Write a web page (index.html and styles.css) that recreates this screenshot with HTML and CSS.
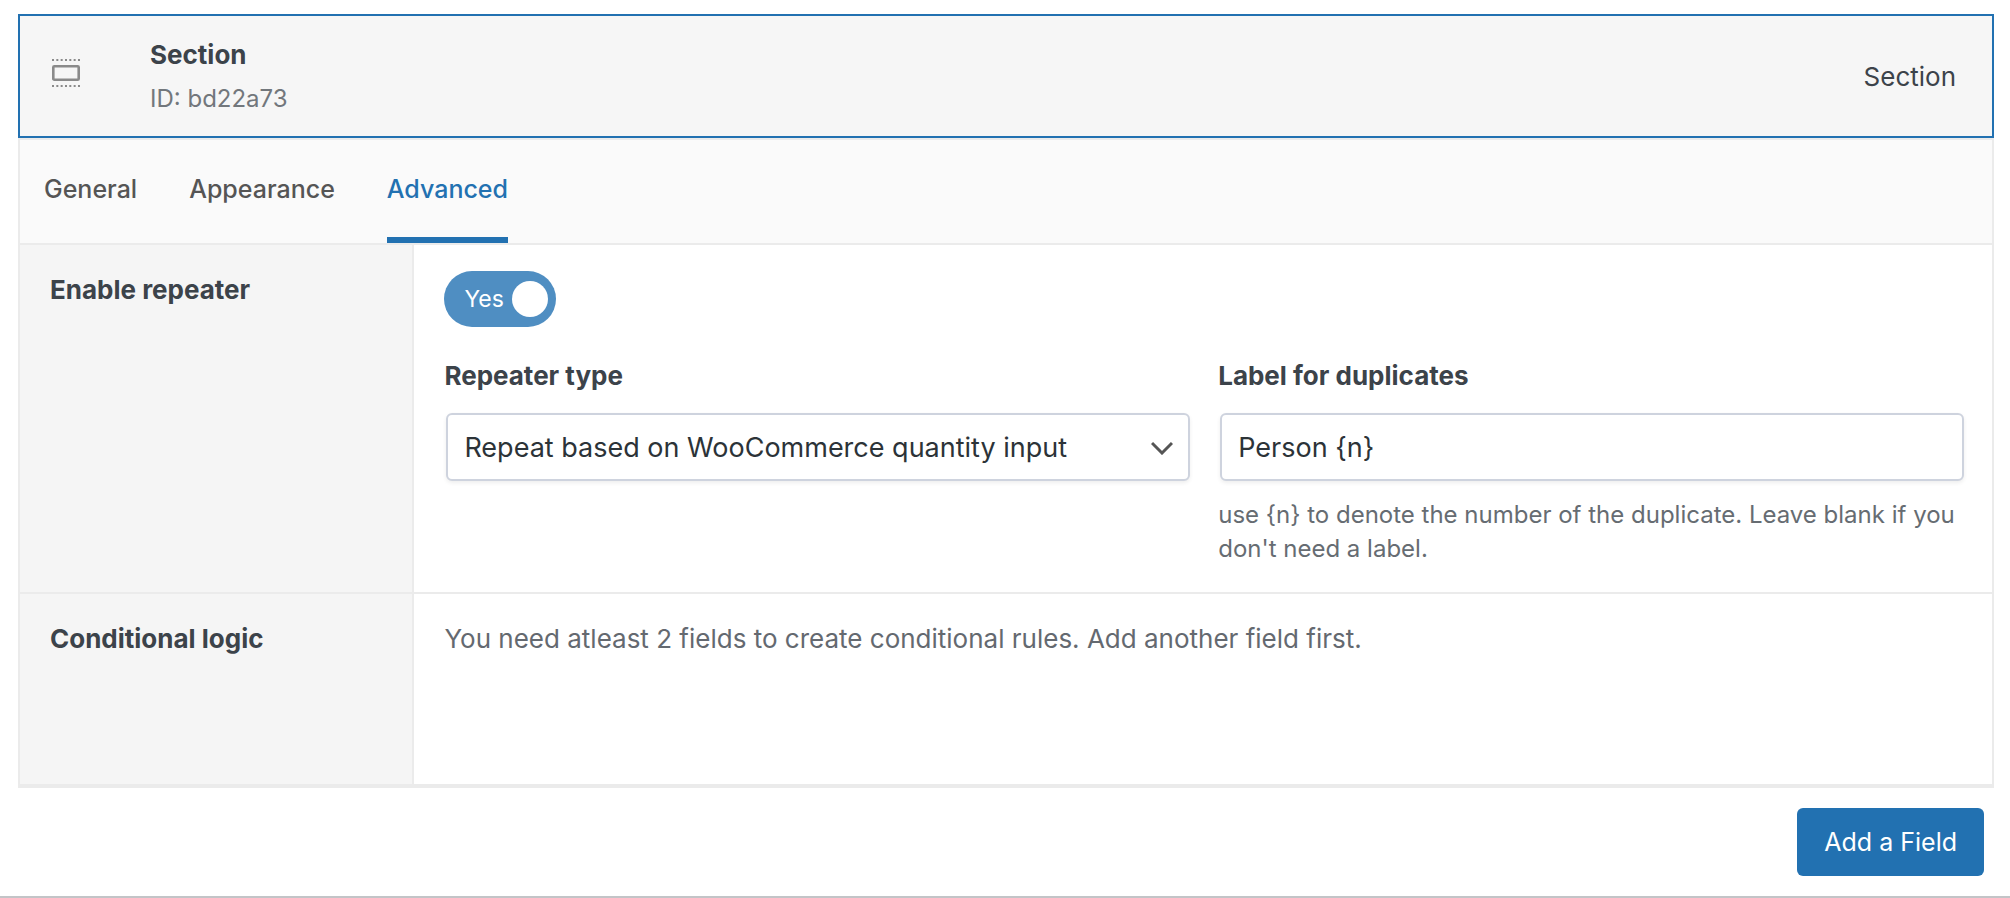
FILE: index.html
```html
<!DOCTYPE html>
<html lang="en">
<head>
    <meta charset="UTF-8">
    <title>Section field</title>
    <link rel="stylesheet" href="styles.css">
</head>
<body>
<div class="field-group">
    <div class="field-header">
        <svg class="field-icon" width="28" height="28" viewBox="0 0 28 28" fill="none" stroke="#8a8a8a">
            <path d="M0 1h28M0 27h28" stroke-width="2" stroke-dasharray="2 2.33"/>
            <rect x="1.3" y="7.3" width="25.4" height="13.4" rx="1" stroke-width="2.6"/>
        </svg>
        <div class="field-title">
            <h3>Section</h3>
            <p>ID: bd22a73</p>
        </div>
        <span class="field-type">Section</span>
    </div>
    <div class="field-body">
        <nav class="tabs">
            <a href="#general">General</a>
            <a href="#appearance">Appearance</a>
            <a href="#advanced" class="active">Advanced</a>
        </nav>
        <div class="setting">
            <div class="setting-label">Enable repeater</div>
            <div class="setting-content">
                <label class="toggle">
                    <input type="checkbox" name="repeater" aria-label="Enable repeater" checked>
                    <span>Yes</span>
                    <i class="knob"></i>
                </label>
                <div class="columns">
                    <div class="column">
                        <label for="repeater-type">Repeater type</label>
                        <div class="select">
                            <select id="repeater-type" class="control">
                                <option>Repeat based on WooCommerce quantity input</option>
                                <option>Repeat with a button</option>
                            </select>
                            <svg class="chevron" width="22" height="14" viewBox="0 0 22 14" fill="none" stroke="#555" stroke-width="3">
                                <path d="M1 2l10 10L21 2"/>
                            </svg>
                        </div>
                    </div>
                    <div class="column">
                        <label for="duplicate-label">Label for duplicates</label>
                        <div class="text">
                            <input type="text" id="duplicate-label" class="control" value="Person {n}">
                        </div>
                        <p class="help">use {n} to denote the number of the duplicate. Leave blank if you don't need a label.</p>
                    </div>
                </div>
            </div>
        </div>
        <div class="setting conditions">
            <div class="setting-label">Conditional logic</div>
            <div class="setting-content">
                <p class="notice">You need atleast 2 fields to create conditional rules. Add another field first.</p>
            </div>
        </div>
    </div>
</div>
<div class="actions">
    <button type="button" class="button">Add a Field</button>
</div>
</body>
</html>
```

FILE: styles.css
```css
* {
    box-sizing: border-box;
}
body {
    font-family: Inter, "Liberation Sans", sans-serif;
    font-size: 26px;
    line-height: 36px;
    color: #3c434a;
    background: #fff;
    margin: 0;
    border-bottom: 2px solid #c3c4c7;
}
h3, p {
    margin: 0;
    font-size: inherit;
}
.field-group {
    padding: 14px 16px 0 18px;
}
.field-header {
    display: flex;
    align-items: center;
    background: #f6f6f6;
    border: 2px solid #2271b1;
    padding: 17px 36px 15px 32px;
}
.field-icon {
    margin: 0 70px 8px 0;
}
.field-title {
    flex: 1;
}
.field-title h3 {
    line-height: 44px;
    font-weight: 700;
}
.field-title p {
    font-size: 24px;
    line-height: 44px;
    color: #72777c;
}
.field-body {
    border: 2px solid #ebebeb;
    border-bottom-width: 4px;
}
.tabs {
    display: flex;
    gap: 52px;
    padding: 0 24px;
    background: #fafafa;
    border-bottom: 2px solid #ebebeb;
    font-size: 25px;
}
.tabs a {
    padding: 31px 0 30px;
    border-bottom: 6px solid transparent;
    color: #555;
    font-weight: 500;
    text-decoration: none;
}
.tabs .active {
    color: #2271b1;
    border-bottom-color: #2271b1;
}
.setting {
    display: flex;
}
.setting + .setting {
    border-top: 2px solid #ebebeb;
}
.setting-label {
    flex: 0 0 20%;
    padding: 27px 30px;
    background: #f5f5f5;
    border-right: 2px solid #ebebeb;
    font-weight: 700;
}
.setting-content {
    flex: 1;
    padding: 26px 28px 26px 30px;
}
.conditions {
    min-height: 192px;
}
.conditions .setting-content {
    padding-top: 27px;
}
.toggle {
    display: flex;
    align-items: center;
    justify-content: space-between;
    width: 112px;
    height: 56px;
    padding: 0 8px 0 20px;
    border-radius: 28px;
    background: #4f8ec2;
    color: #fff;
    font-size: 23px;
    cursor: pointer;
}
.toggle input {
    position: absolute;
    opacity: 0;
}
.knob {
    width: 36px;
    height: 36px;
    border-radius: 50%;
    background: #fff;
}
.columns {
    display: grid;
    grid-template-columns: 1fr 1fr;
    gap: 28px;
    margin-top: 31px;
}
.column label {
    display: block;
    margin-bottom: 19px;
    font-weight: 700;
}
.select, .text {
    position: relative;
    padding-left: 2px;
}
.control {
    display: block;
    width: 100%;
    height: 68px;
    padding: 0 16px;
    border: 2px solid #ced3de;
    border-radius: 6px;
    background: #fff;
    box-shadow: 0 2px 4px rgba(0, 0, 0, .07);
    color: #2c3338;
    font-family: inherit;
    font-size: 27px;
    appearance: none;
}
.chevron {
    position: absolute;
    right: 17px;
    top: 28px;
    pointer-events: none;
}
.help {
    margin-top: 17px;
    font-size: 24px;
    line-height: 34px;
    color: #666c72;
}
.notice {
    color: #646970;
}
.actions {
    display: flex;
    justify-content: flex-end;
    padding: 20px 26px;
}
.button {
    height: 68px;
    padding: 0 27px;
    border: 0;
    border-radius: 6px;
    background: #2271b1;
    color: #fff;
    font-family: inherit;
    font-size: 25px;
    cursor: pointer;
}
```
